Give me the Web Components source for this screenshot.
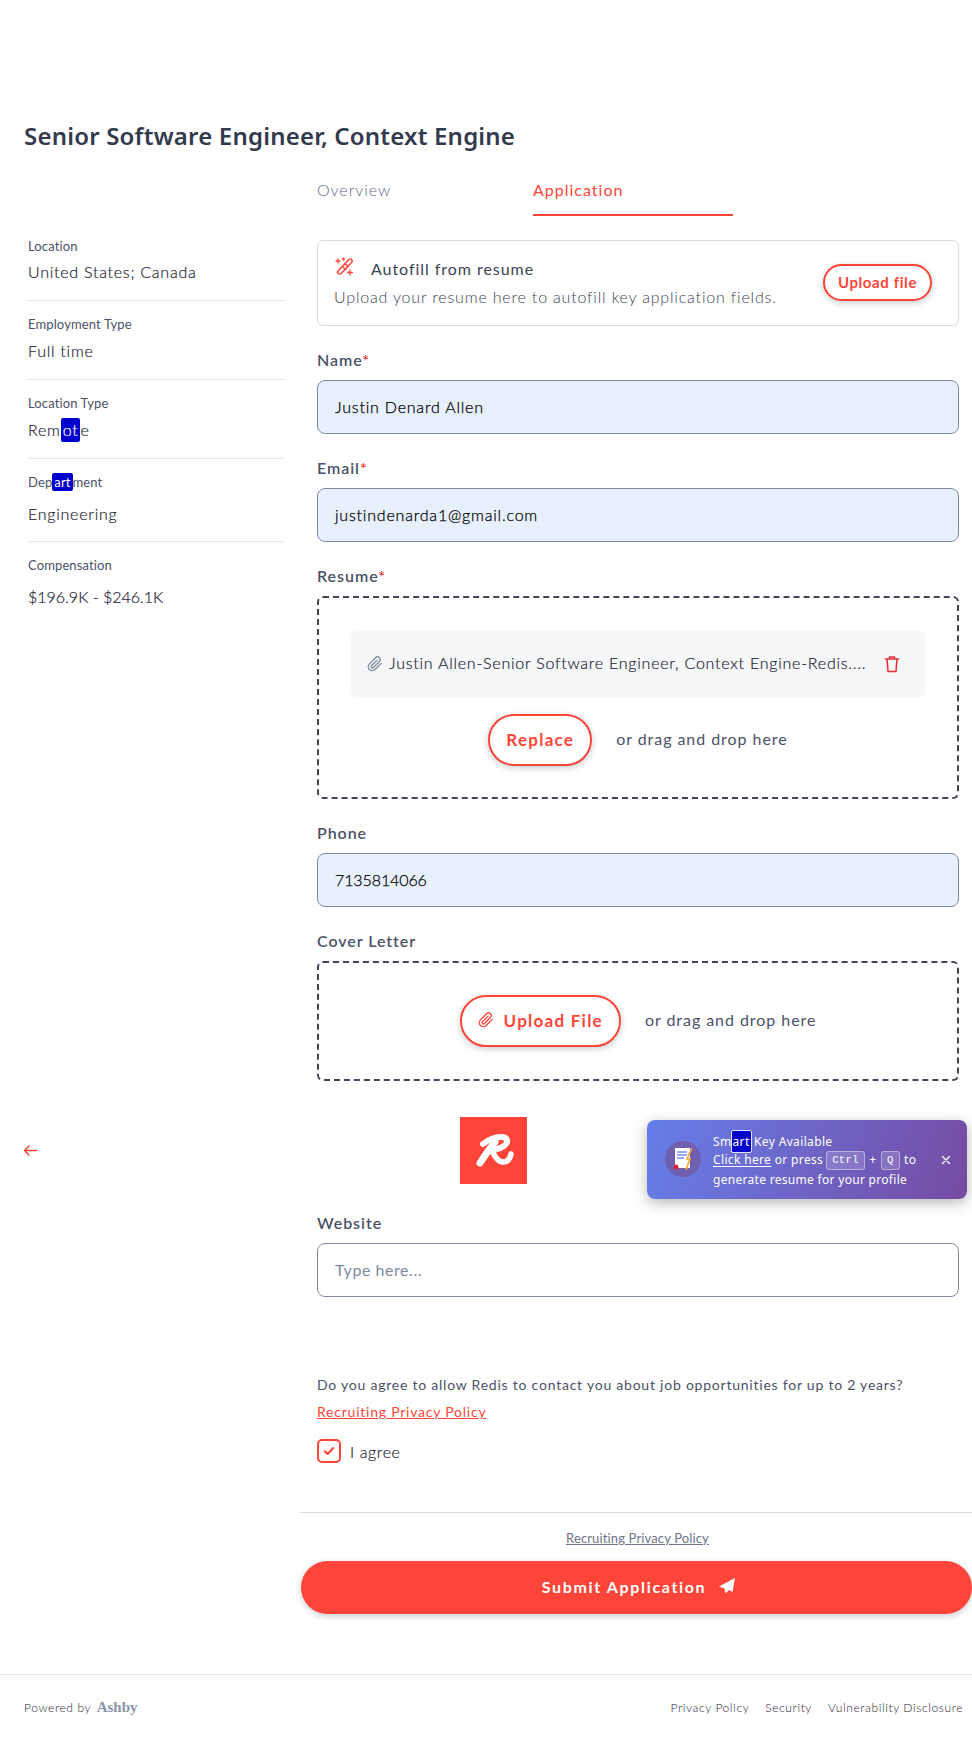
<!DOCTYPE html>
<html lang="en">
<head>
<meta charset="utf-8">
<title>Senior Software Engineer, Context Engine</title>
<style>
  html, body { margin: 0; padding: 0; background: #fff; }
  body { width: 972px; height: 1741px; overflow: hidden; position: relative; font-family: Lato, "Open Sans", sans-serif; color: #3c4356; }
</style>
</head>
<body>
<job-page></job-page>

<script>
const RED = '#ff4539';

// shared svg bits
const clip = (c, s) => `<svg width="${s}" height="${s}" viewBox="0 0 24 24" fill="none" stroke="${c}" stroke-width="2" stroke-linecap="round" stroke-linejoin="round"><path d="M21.4 11.1l-9.2 9.2a6 6 0 0 1-8.5-8.5l9.2-9.2a4 4 0 0 1 5.7 5.7l-9.2 9.2a2 2 0 0 1-2.8-2.8l8.5-8.5"/></svg>`;

const define = (tag, html) => customElements.define(tag, class extends HTMLElement {
  constructor() {
    super();
    this.attachShadow({ mode: 'open' }).innerHTML = html;
  }
});

class MetaItem extends HTMLElement {
  constructor() {
    super();
    this.attachShadow({ mode: 'open' }).innerHTML = `
    <style>
      :host { display: block; padding: 14px 0 16px; border-bottom: 1px solid #e4e6ea; }
      :host([last]) { border-bottom: 0; }
      :host([first]) { padding-top: 0; --gap: 5px; }
      .label { font-size: 13px; line-height: 18px; color: #4b5268; letter-spacing: .12px; }
      .value { font-size: 16px; line-height: 24px; font-weight: 300; -webkit-text-stroke: .2px currentColor; letter-spacing: var(--track, .75px); color: #1f2536; margin-top: var(--gap, 6px); }
      :host([wide]) { --gap: 11px; padding-bottom: 15px; }
      :host([tight]) { --track: 0; }
      .sel { background: #0000cd; color: #fff; border-radius: 2px; padding: 0 2px; display: inline-block; }
    </style>
    <div class="label"></div>
    <div class="value"></div>`;
  }
  connectedCallback() {
    const mark = s => s.replace(/\[(.+?)\]/, '<span class="sel">$1</span>');
    this.shadowRoot.querySelector('.label').innerHTML = mark(this.getAttribute('label'));
    this.shadowRoot.querySelector('.value').innerHTML = mark(this.getAttribute('value'));
  }
}
customElements.define('meta-item', MetaItem);

define('job-sidebar', `
<style>
  :host { display: block; padding: 83px 0 0 28px; }
  .back { display: block; margin: 520px 0 0 -5px; }
</style>
<meta-item first label="Location" value="United States; Canada"></meta-item>
<meta-item label="Employment Type" value="Full time"></meta-item>
<meta-item label="Location Type" value="Rem[ot]e"></meta-item>
<meta-item wide label="Dep[art]ment" value="Engineering"></meta-item>
<meta-item wide last tight label="Compensation" value="$196.9K - $246.1K"></meta-item>
<svg class="back" width="15" height="13" viewBox="0 0 15 13" fill="none" stroke="${RED}" stroke-width="1.500" stroke-linecap="round" stroke-linejoin="round"><path d="M14 6.500H1.500M6 2L1.500 6.500 6 11"/></svg>
`);

define('app-tabs', `
<style>
  :host { display: flex; gap: 16px; }
  div { width: 200px; box-sizing: border-box; padding: 24px 0 12px; font-size: 16px; line-height: 24px; font-weight: 300; letter-spacing: .95px; color: #5f6a85; border-bottom: 2px solid transparent; }
  .on { color: ${RED}; border-bottom-color: ${RED}; font-weight: 400; letter-spacing: 1px; }
</style>
<div>Overview</div>
<div class="on">Application</div>
`);

class PillButton extends HTMLElement {
  constructor() {
    super();
    this.attachShadow({ mode: 'open' }).innerHTML = `
    <style>
      :host { display: inline-flex; align-items: center; justify-content: center; gap: 10px; box-sizing: border-box; height: 52px; padding: 0 16px 2px; border: 2px solid ${RED}; border-radius: 26px; background: #fff; color: ${RED}; font-weight: 700; font-size: 17px; letter-spacing: 1.25px; box-shadow: 0 2px 6px rgba(40,50,70,.25); }
      :host([small]) { height: 37px; font-size: 15px; letter-spacing: .6px; padding: 0 13px; margin-bottom: 2px; }
    </style>
    <slot></slot>`;
  }
}
customElements.define('pill-button', PillButton);

define('autofill-card', `
<style>
  :host { display: flex; align-items: center; justify-content: space-between; box-sizing: border-box; height: 86px; margin-top: 24px; padding: 0 26px 0 16px; border: 1px solid #d8dbe4; border-radius: 6px; }
  .top { display: flex; align-items: center; gap: 17px; font-size: 16px; line-height: 24px; color: #3c4356; letter-spacing: .95px; }
  .sub { font-size: 16px; line-height: 24px; margin-top: 4px; font-weight: 300; color: #3c4356; letter-spacing: .82px; }
  svg { margin-top: -4px; }
</style>
<div>
  <div class="top">
    <svg width="20" height="20" viewBox="0 0 20 20" fill="none" stroke="${RED}" stroke-width="1.500" stroke-linejoin="round" stroke-linecap="round">
      <path d="M15 2.500a2 2 0 0 1 2.800 2.800L7 16.500a2 2 0 0 1-2.900-2.800z"/>
      <path d="M9 10l2.800 2.800M11.500 7l2.800 2.800"/>
      <path d="M4 2v4M2 4h4M9.500 1v2M8.500 2h2M16 13v5M13.500 15.500h5" stroke-width="1.300"/>
    </svg>
    <span>Autofill from resume</span>
  </div>
  <div class="sub">Upload your resume here to autofill key application fields.</div>
</div>
<pill-button small>Upload file</pill-button>
`);

class FormField extends HTMLElement {
  constructor() {
    super();
    this.attachShadow({ mode: 'open' }).innerHTML = `
    <style>
      :host { display: block; margin-top: 22px; }
      label { display: block; font-size: 16px; line-height: 24px; font-weight: 600; color: #4b5268; letter-spacing: .95px; margin-bottom: 8px; }
      b { color: #e5342b; font-weight: 600; }
    </style>
    <label></label><slot></slot>`;
  }
  connectedCallback() {
    const req = this.hasAttribute('required') ? '<b>*</b>' : '';
    this.shadowRoot.querySelector('label').innerHTML = this.getAttribute('label') + req;
  }
}
customElements.define('form-field', FormField);

define('text-box', `
<style>
  :host { display: flex; align-items: center; box-sizing: border-box; height: 54px; padding: 0 17px 2px; background: #e8f0fe; border: 1px solid #7f8aa3; border-radius: 8px; font-size: 16px; font-weight: 300; -webkit-text-stroke: .25px currentColor; letter-spacing: .8px; color: #000; }
  :host([empty]) { background: #fff; color: #7f8aa3; -webkit-text-stroke: 0; font-weight: 400; letter-spacing: .55px; }
</style>
<slot></slot>
`);

define('drop-zone', `
<style>
  :host { display: block; box-sizing: border-box; border: 2px dashed #3f4658; border-radius: 6px; padding: 32px; }
  .row { display: flex; align-items: center; justify-content: center; gap: 24px; font-size: 16px; letter-spacing: .95px; color: #4b5268; }
  .row span { padding-bottom: 4px; }
</style>
<slot name="file"></slot>
<div class="row"><slot></slot><span>or drag and drop here</span></div>
`);

define('file-chip', `
<style>
  :host { display: flex; align-items: center; box-sizing: border-box; height: 68px; margin-bottom: 16px; padding: 0 25px 0 16px; background: #f6f7f9; border-radius: 6px; font-size: 16px; font-weight: 300; -webkit-text-stroke: .2px currentColor; letter-spacing: .76px; color: #1f2536; }
  span { flex: 1; margin-left: 6px; padding-bottom: 4px; white-space: nowrap; }
  svg { flex: none; }
</style>
${clip('#7f8aa3', 16)}
<span>Justin Allen-Senior Software Engineer, Context Engine-Redis....</span>
<svg width="16" height="18" viewBox="0 0 16 18" fill="none" stroke="#e5343b" stroke-width="1.600" stroke-linejoin="round" stroke-linecap="round"><path d="M1.500 4h13M5.500 4V2h5v2M3 4l1 12.500h8L13 4"/></svg>
`);

define('logo-row', `
<style>
  :host { display: block; height: 67px; margin: 36px 0 0 143px; }
  svg { display: block; }
</style>
<svg width="67" height="67" viewBox="0 0 67 67" role="img" aria-label="Redis logo">
  <rect width="67" height="67" fill="${RED}"/>
  <g fill="none" stroke="#fff" stroke-linecap="round" stroke-linejoin="round">
    <path d="M23 27c5-4 12-7 18-7 7 0 8 5 3 9-3 2-6 3-10 4" stroke-width="6"/>
    <path d="M35 25c-5 6-10 13-15 21" stroke-width="7"/>
    <path d="M32 34c3 6 6 11 11 11 4 0 7-3 8-8" stroke-width="5.500"/>
  </g>
</svg>
`);

define('consent-block', `
<style>
  :host { display: block; margin-top: 76px; font-size: 14px; font-weight: 400; letter-spacing: .77px; color: #4b5268; }
  p { margin: 0; line-height: 24px; }
  a { display: block; color: ${RED}; text-decoration: underline; line-height: 24px; margin-top: 3px; }
  .agree { display: flex; align-items: center; gap: 9px; margin-top: 15px; font-size: 16px; font-weight: 300; -webkit-text-stroke: .2px currentColor; letter-spacing: .6px; color: #1f2536; }
  .box { display: flex; align-items: center; justify-content: center; box-sizing: border-box; width: 24px; height: 24px; border: 2px solid ${RED}; border-radius: 5px; }
</style>
<p>Do you agree to allow Redis to contact you about job opportunities for up to 2 years?</p>
<a>Recruiting Privacy Policy</a>
<div class="agree">
  <span class="box"><svg width="12" height="10" viewBox="0 0 14 12" fill="none" stroke="${RED}" stroke-width="2.600" stroke-linecap="round" stroke-linejoin="round"><path d="M2 6.500l3.500 3L12 2.500"/></svg></span>
  <span>I agree</span>
</div>
`);

define('submit-bar', `
<style>
  :host { display: block; margin-top: 49px; border-top: 1px solid #dcdde3; }
  a { display: block; text-align: center; font-size: 13px; line-height: 18px; margin-top: 16px; padding-left: 3px; color: #6c7489; text-decoration: underline; letter-spacing: .14px; }
  .btn { display: flex; align-items: center; justify-content: center; gap: 12px; box-sizing: border-box; height: 53px; margin: 14px 0 0 1px; padding: 0 0 3px 5px; border-radius: 27px; background: ${RED}; color: #fff; font-size: 16px; font-weight: 700; letter-spacing: 1.65px; box-shadow: 0 2px 6px rgba(40,50,70,.25); }
</style>
<a>Recruiting Privacy Policy</a>
<div class="btn"><span>Submit Application</span>
  <svg width="18" height="18" viewBox="0 0 18 18" fill="#fff"><path d="M17 1L14.500 15 11 13 7.500 16.500 6.500 11.500 1 9.500z"/></svg>
</div>
`);

define('page-footer', `
<style>
  :host { display: flex; align-items: center; justify-content: space-between; box-sizing: border-box; height: 66px; margin-top: 60px; padding: 0 9px 0 24px; border-top: 1px solid #e6e7ea; font-size: 12px; font-weight: 300; color: #1f2536; letter-spacing: .6px; }
  nav { display: flex; gap: 16px; }
  b { font-family: "Liberation Serif", serif; font-size: 15px; font-weight: 700; color: #8a94a6; letter-spacing: 0; margin-left: 2px; }
</style>
<div>Powered by <b>Ashby</b></div>
<nav><span>Privacy Policy</span><span>Security</span><span>Vulnerability Disclosure</span></nav>
`);

define('smart-popup', `
<style>
  :host { position: absolute; left: 647px; top: 1120px; width: 320px; height: 79px; box-sizing: border-box; padding: 13px 0 0 66px; border-radius: 8px; background: linear-gradient(110deg, #667eea, #764ba2); box-shadow: 0 4px 14px rgba(0,0,0,.28); color: #fff; font-family: "Noto Sans", sans-serif; font-size: 12px; letter-spacing: .35px; }
  div { white-space: nowrap; height: 18px; line-height: 18px; }
  div:last-of-type { margin-top: 2px; letter-spacing: .3px; }
  .sel { background: #0000cd; outline: 1px solid #dfe3ff; border-radius: 1px; padding: 2px 1px; }
  u { text-underline-offset: 2px; }
  kbd { display: inline-block; font: 10.500px/17px "Liberation Mono", monospace; padding: 0 5px; margin: -2px 1px; vertical-align: middle; background: rgba(255,255,255,.16); border: 1px solid rgba(255,255,255,.4); border-radius: 3px; }
  .icon { position: absolute; left: 18px; top: 21px; }
  .close { position: absolute; left: 293px; top: 34px; }
</style>
<svg class="icon" width="36" height="36" viewBox="0 0 36 36">
  <circle cx="18" cy="18" r="18" fill="#6f5fae"/>
  <rect x="10" y="7" width="15" height="20" fill="#fff"/>
  <path d="M12 11h10M12 14h10M12 17h7" stroke="#7c8ef0" stroke-width="1.500"/>
  <path d="M27 7l-5 11h3l-4 11" fill="none" stroke="#f5a623" stroke-width="1.600"/>
  <circle cx="11" cy="26" r="2.500" fill="#e0243a"/>
</svg>
<div>Sm<span class="sel">art</span> Key Available</div>
<div><u>Click here</u> or press<kbd style="margin-left:3px">Ctrl</kbd> + <kbd>Q</kbd> to</div>
<div>generate resume for your profile</div>
<svg class="close" width="12" height="12" viewBox="0 0 12 12" stroke="#fff" stroke-width="1.300" stroke-linecap="round"><path d="M2.500 2.500l7 7M9.500 2.500l-7 7"/></svg>
`);

define('application-form', `
<style>
  :host { display: block; padding: 0 13px 0 17px; }
</style>
<app-tabs></app-tabs>
<autofill-card></autofill-card>
<form-field required label="Name"><text-box>Justin Denard Allen</text-box></form-field>
<form-field required label="Email"><text-box>justindenarda1@gmail.com</text-box></form-field>
<form-field required label="Resume">
  <drop-zone style="padding-bottom:31px">
    <file-chip slot="file"></file-chip>
    <pill-button>Replace</pill-button>
  </drop-zone>
</form-field>
<form-field label="Phone"><text-box style="letter-spacing:-.1px">7135814066</text-box></form-field>
<form-field label="Cover Letter">
  <drop-zone><pill-button>${clip(RED, 16)}<span>Upload File</span></pill-button></drop-zone>
</form-field>
<logo-row></logo-row>
<form-field label="Website" style="margin-top:27px"><text-box empty>Type here...</text-box></form-field>
<consent-block></consent-block>
`);

define('job-page', `
<style>
  :host { display: block; }
  h1 { margin: 0; padding: 118px 0 0 24px; font-family: "Noto Sans", sans-serif; font-size: 24px; line-height: 36px; font-weight: 600; color: #333a4d; letter-spacing: .2px; }
  .grid { display: grid; grid-template-columns: 284px 16px 672px; }
  main { grid-column: 3; }
  job-sidebar { grid-column: 1; }
</style>
<h1>Senior Software Engineer, Context Engine</h1>
<div class="grid">
  <job-sidebar></job-sidebar>
  <main>
    <application-form></application-form>
    <submit-bar></submit-bar>
  </main>
</div>
<page-footer></page-footer>
<smart-popup></smart-popup>
`);
</script>
</body>
</html>
